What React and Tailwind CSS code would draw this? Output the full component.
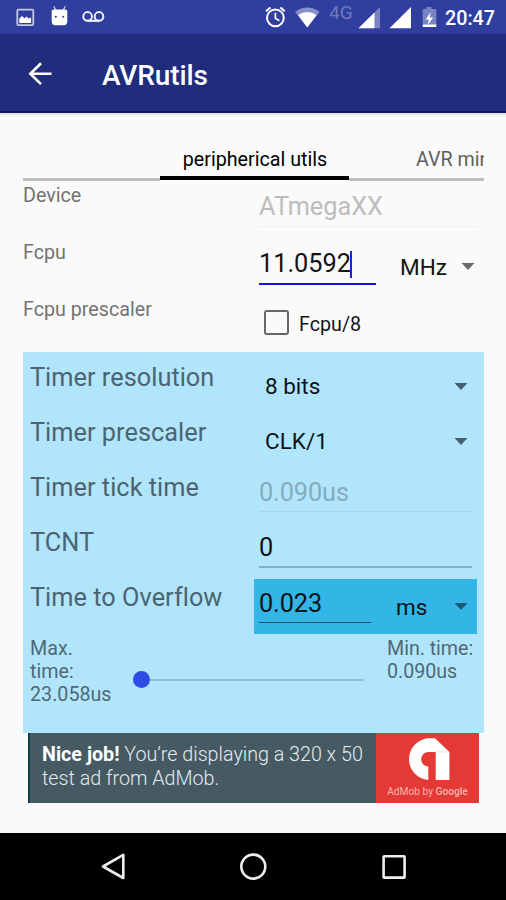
import React from "react";

const Caret = ({ className = "" }) => (
  <svg className={"h-[7px] w-[14px] shrink-0 " + className} viewBox="0 0 14 7">
    <path d="M0.5 0h13L7 7z" fill="currentColor" />
  </svg>
);

function StatusBar() {
  return (
    <div className="flex h-[34px] items-start bg-[#303f9f] text-white">
      <svg className="h-[34px] w-[120px]" viewBox="0 0 120 34">
        <rect x="17.3" y="9.6" width="16" height="15.6" rx="1.2" fill="none" stroke="#c3c8e6" strokeWidth="1.8" />
        <path d="M19.3 23v-4.5l2.7-2.6 2.4 2.3 2.2-1.8 2.2 2.4 2.3-1.5V23z" fill="#fff" />
        <path d="M53.8 6.4l2 3.8M65.2 6.4l-2 3.8" stroke="#c3c8e6" strokeWidth="1.3" />
        <path d="M53.5 9.4h12q1.8 0 1.8 1.8v10.3q0 3.7-3.7 3.7h-8.2q-3.7 0-3.7-3.7V11.2q0-1.8 1.8-1.8z" fill="#fff" />
        <circle cx="55.8" cy="16.8" r="1" fill="#303f9f" />
        <circle cx="63.2" cy="16.8" r="1" fill="#303f9f" />
        <g fill="none" stroke="#eef0fa" strokeWidth="2">
          <circle cx="87.6" cy="16.4" r="4.3" />
          <circle cx="99" cy="16.4" r="4.3" />
          <path d="M87.6 20.9H99" />
        </g>
      </svg>
      <svg className="ml-[143px] h-[34px] w-[62px]" viewBox="263 0 62 34">
        <g fill="none" stroke="#fff" strokeWidth="2">
          <circle cx="275.4" cy="17.8" r="8.4" />
          <path d="M275.4 12.8v5.5l4 2.5" strokeWidth="1.7" />
          <path d="M266 11.2l4.4-3.7M284.8 11.2l-4.4-3.7" />
        </g>
        <path d="M295 11.8q12.3-8.6 24.6 0L307.3 27.4z" fill="#8790c8" />
        <path d="M298 15q9.3-6.2 18.6 0l-9.3 12.4z" fill="#fff" />
      </svg>
      <span className="ml-[4px] mt-[2px] w-[26px] text-[19px] leading-[22px] text-[#6f79bc]">4G</span>
      <svg className="ml-[3px] h-[34px] w-[82px]" viewBox="358 0 82 34">
        <path d="M358.5 28.2L380 7v21.2z" fill="#7a84c2" />
        <path d="M358.5 28.2L374.5 12.4v15.8z" fill="#fff" />
        <path d="M389.5 28.2L411 7v21.2z" fill="#fff" />
        <path d="M426.4 7h5.2v2H435q1.3 0 1.3 1.3V25h-13.6V10.3q0-1.3 1.3-1.3h2.4z" fill="#7a84c2" />
        <path d="M422.7 24.5h13.6V27h-13.6z" fill="#fff" />
        <path d="M430.7 12l-5 7.4h3.2L427.6 25l5.5-7.5h-3.4z" fill="#fff" />
      </svg>
      <span className="ml-[5px] mt-[7px] whitespace-nowrap text-[19.7px] font-medium leading-[23px]">20:47</span>
    </div>
  );
}

function Header() {
  return (
    <header className="flex h-[79px] items-start border-b-2 border-[#0e1470] bg-[#202c7c] text-white">
      <svg className="ml-[28px] mt-[28px] h-[24px] w-[25px]" viewBox="28 62 25 24">
        <path d="M51.5 73.7H30.5M41 63.3L30.3 73.7 41 84.1" fill="none" stroke="#fff" strokeWidth="2.6" />
      </svg>
      <h1 className="ml-[49px] mt-[25px] text-[28px] font-medium leading-[33px] tracking-[-0.1px]">AVRutils</h1>
    </header>
  );
}

function Tabs() {
  return (
    <div className="mt-[35px] flex h-[33px] overflow-hidden whitespace-nowrap text-[19.7px] leading-[23px]">
      <div className="w-[137px] pt-[30px]">
        <div className="h-[3px] bg-[#bdbdbd]" />
      </div>
      <div className="w-[189px] text-center text-black">
        <div className="h-[28px] pl-px">peripherical utils</div>
        <div className="h-[4px] bg-black" />
      </div>
      <div className="w-[135px] text-[#606060]">
        <div className="h-[30px] overflow-hidden pl-[67px]">AVR mini</div>
        <div className="h-[3px] bg-[#bdbdbd]" />
      </div>
    </div>
  );
}

const Label = ({ children }) => (
  <div className="w-[224px] shrink-0 text-[25.3px] leading-[30px] tracking-[0.03px] text-[#4b6470]">{children}</div>
);

function Settings() {
  return (
    <div className="text-[19.7px] leading-[23px] text-[#737373]">
      <div className="flex h-[58px]">
        <div className="w-[236px] pt-[3px]">Device</div>
        <div className="mt-[11px] h-[35px] w-[220px] border-b border-[#f0f0f0] text-[25.3px] leading-[30px] text-[#bdbdbd]">ATmegaXX</div>
      </div>
      <div className="flex h-[56px]">
        <div className="w-[236px] pt-[2px]">Fcpu</div>
        <div className="mt-[10px] flex h-[36px] w-[117px] items-start border-b-[2.5px] border-[#1414dc] text-[25.3px] leading-[30px] text-[#141414]">
          <span className="w-[91px]">11.0592</span>
          <span className="mt-[2px] h-[27px] w-[2px] bg-[#2020dc]" />
        </div>
        <div className="ml-[24px] mt-[15px] flex h-[26px] w-[75px] justify-between text-[22.5px] leading-[26px] text-[#141414]">
          MHz
          <Caret className="mt-[9px] text-[#6b6b6b]" />
        </div>
      </div>
      <div className="flex h-[57px]">
        <div className="w-[241px] pt-[3px]">Fcpu prescaler</div>
        <div className="mt-[15px] h-[25px] w-[25px] rounded-[3px] border-[2.5px] border-[#666]" />
        <div className="ml-[10px] mt-[18px] text-[#141414]">Fcpu/8</div>
      </div>
    </div>
  );
}

function TimerPanel() {
  return (
    <section className="h-[381px] w-[461px] bg-[#b1e5fc] pl-[7px] pt-[11px] text-[#0c1418]">
      <div className="flex h-[55px]">
        <Label>Timer resolution</Label>
        <div className="ml-[11px] mt-[10px] flex h-[26px] w-[203px] justify-between text-[22.5px] leading-[26px]">
          8 bits
          <Caret className="mt-[10px] text-[#435f70]" />
        </div>
      </div>
      <div className="flex h-[55px]">
        <Label>Timer prescaler</Label>
        <div className="ml-[11px] mt-[10px] flex h-[26px] w-[203px] justify-between text-[22.5px] leading-[26px]">
          CLK/1
          <Caret className="mt-[10px] text-[#435f70]" />
        </div>
      </div>
      <div className="flex h-[54px]">
        <Label>Timer tick time</Label>
        <div className="ml-[5px] mt-[5px] h-[34px] w-[212px] border-b border-[#a4d6eb] text-[25.3px] leading-[30px] tracking-[-0.1px] text-[#84adbe]">0.090us</div>
      </div>
      <div className="flex h-[52px]">
        <div className="pt-[1px]">
          <Label>TCNT</Label>
        </div>
        <div className="ml-[5px] mt-[6px] h-[35px] w-[213px] border-b-2 border-[#84b0c6] text-[25.3px] leading-[30px]">0</div>
      </div>
      <div className="flex h-[55px]">
        <div className="pt-[4px]">
          <Label>Time to Overflow</Label>
        </div>
        <div className="flex h-[55px] w-[223px] bg-[#33b5e5]">
          <div className="ml-[5px] mt-[10px] h-[34px] w-[112px] border-b-[1.5px] border-[#12506a] text-[25.3px] leading-[30px] tracking-[-0.1px]">0.023</div>
          <div className="ml-[25px] mt-[15px] flex h-[26px] w-[72px] justify-between text-[22.5px] leading-[26px]">
            ms
            <Caret className="mt-[9px] text-[#1b5873]" />
          </div>
        </div>
      </div>
      <div className="flex pt-[3px] text-[19.7px] leading-[23.2px] text-[#4f6975]">
        <div className="w-[103px]">Max.<br />time:<br />23.058us</div>
        <div className="mt-[34px] flex h-[17px] w-[231px] items-center">
          <div className="h-[17px] w-[17px] shrink-0 rounded-full bg-[#2f4be6]" />
          <div className="h-[2px] grow bg-[#92c0d4]" />
        </div>
        <div className="ml-[23px] whitespace-nowrap tracking-[-0.05px]">Min. time:<br />0.090us</div>
      </div>
    </section>
  );
}

function AdBanner() {
  return (
    <div className="ml-[5px] flex h-[70px] w-[451px] border-l-2 border-[#123c4c] bg-[#465a64] text-[#e6eaec]">
      <div className="w-[346px] whitespace-nowrap pl-[12px] pt-[10px] text-[19.7px] font-light leading-[24px]">
        <b className="font-bold text-white">Nice job!</b> You’re displaying a 320 x 50
        <br />
        test ad from AdMob.
      </div>
      <div className="flex grow flex-col items-center bg-[#e53935]">
        <svg className="mt-[4px] h-[44px] w-[44px]" viewBox="405 737 44 44">
          <path d="M427.6 738.3H434L448.4 752V780H434.7V752H427.5A7.2 7.2 0 0 0 427.3 766.5V780A20.9 20.9 0 0 1 427.6 738.3Z" fill="#fff" />
          <path d="M434.7 752H448" stroke="#d8d8d8" strokeWidth=".7" />
        </svg>
        <div className="mt-[4px] whitespace-nowrap text-[10.2px] leading-[14px] text-[#f8b4b0]">
          AdMob by <span className="font-medium">Google</span>
        </div>
      </div>
    </div>
  );
}

function NavBar() {
  return (
    <nav className="flex h-[67px] items-center justify-center bg-black">
      <svg className="h-[67px] w-[320px]" viewBox="93 833 320 67" fill="none" stroke="#eee" strokeWidth="2.6" strokeLinejoin="round">
        <path d="M123.3 854.8V878L103 866.5z" />
        <circle cx="253.3" cy="866.6" r="12" />
        <rect x="383.6" y="856.2" width="21" height="21.4" rx=".6" />
      </svg>
    </nav>
  );
}

export default function App() {
  return (
    <div className="flex h-[900px] w-[506px] flex-col overflow-hidden bg-[#fafafa] font-['Roboto',sans-serif]">
      <StatusBar />
      <Header />
      <div className="h-[4px] shrink-0 bg-gradient-to-b from-[#dcdcdc] to-[#fafafa]" />
      <main className="-mt-[4px] flex grow flex-col pl-[23px] pr-[22px]">
        <Tabs />
        <Settings />
        <TimerPanel />
        <AdBanner />
      </main>
      <NavBar />
    </div>
  );
}
